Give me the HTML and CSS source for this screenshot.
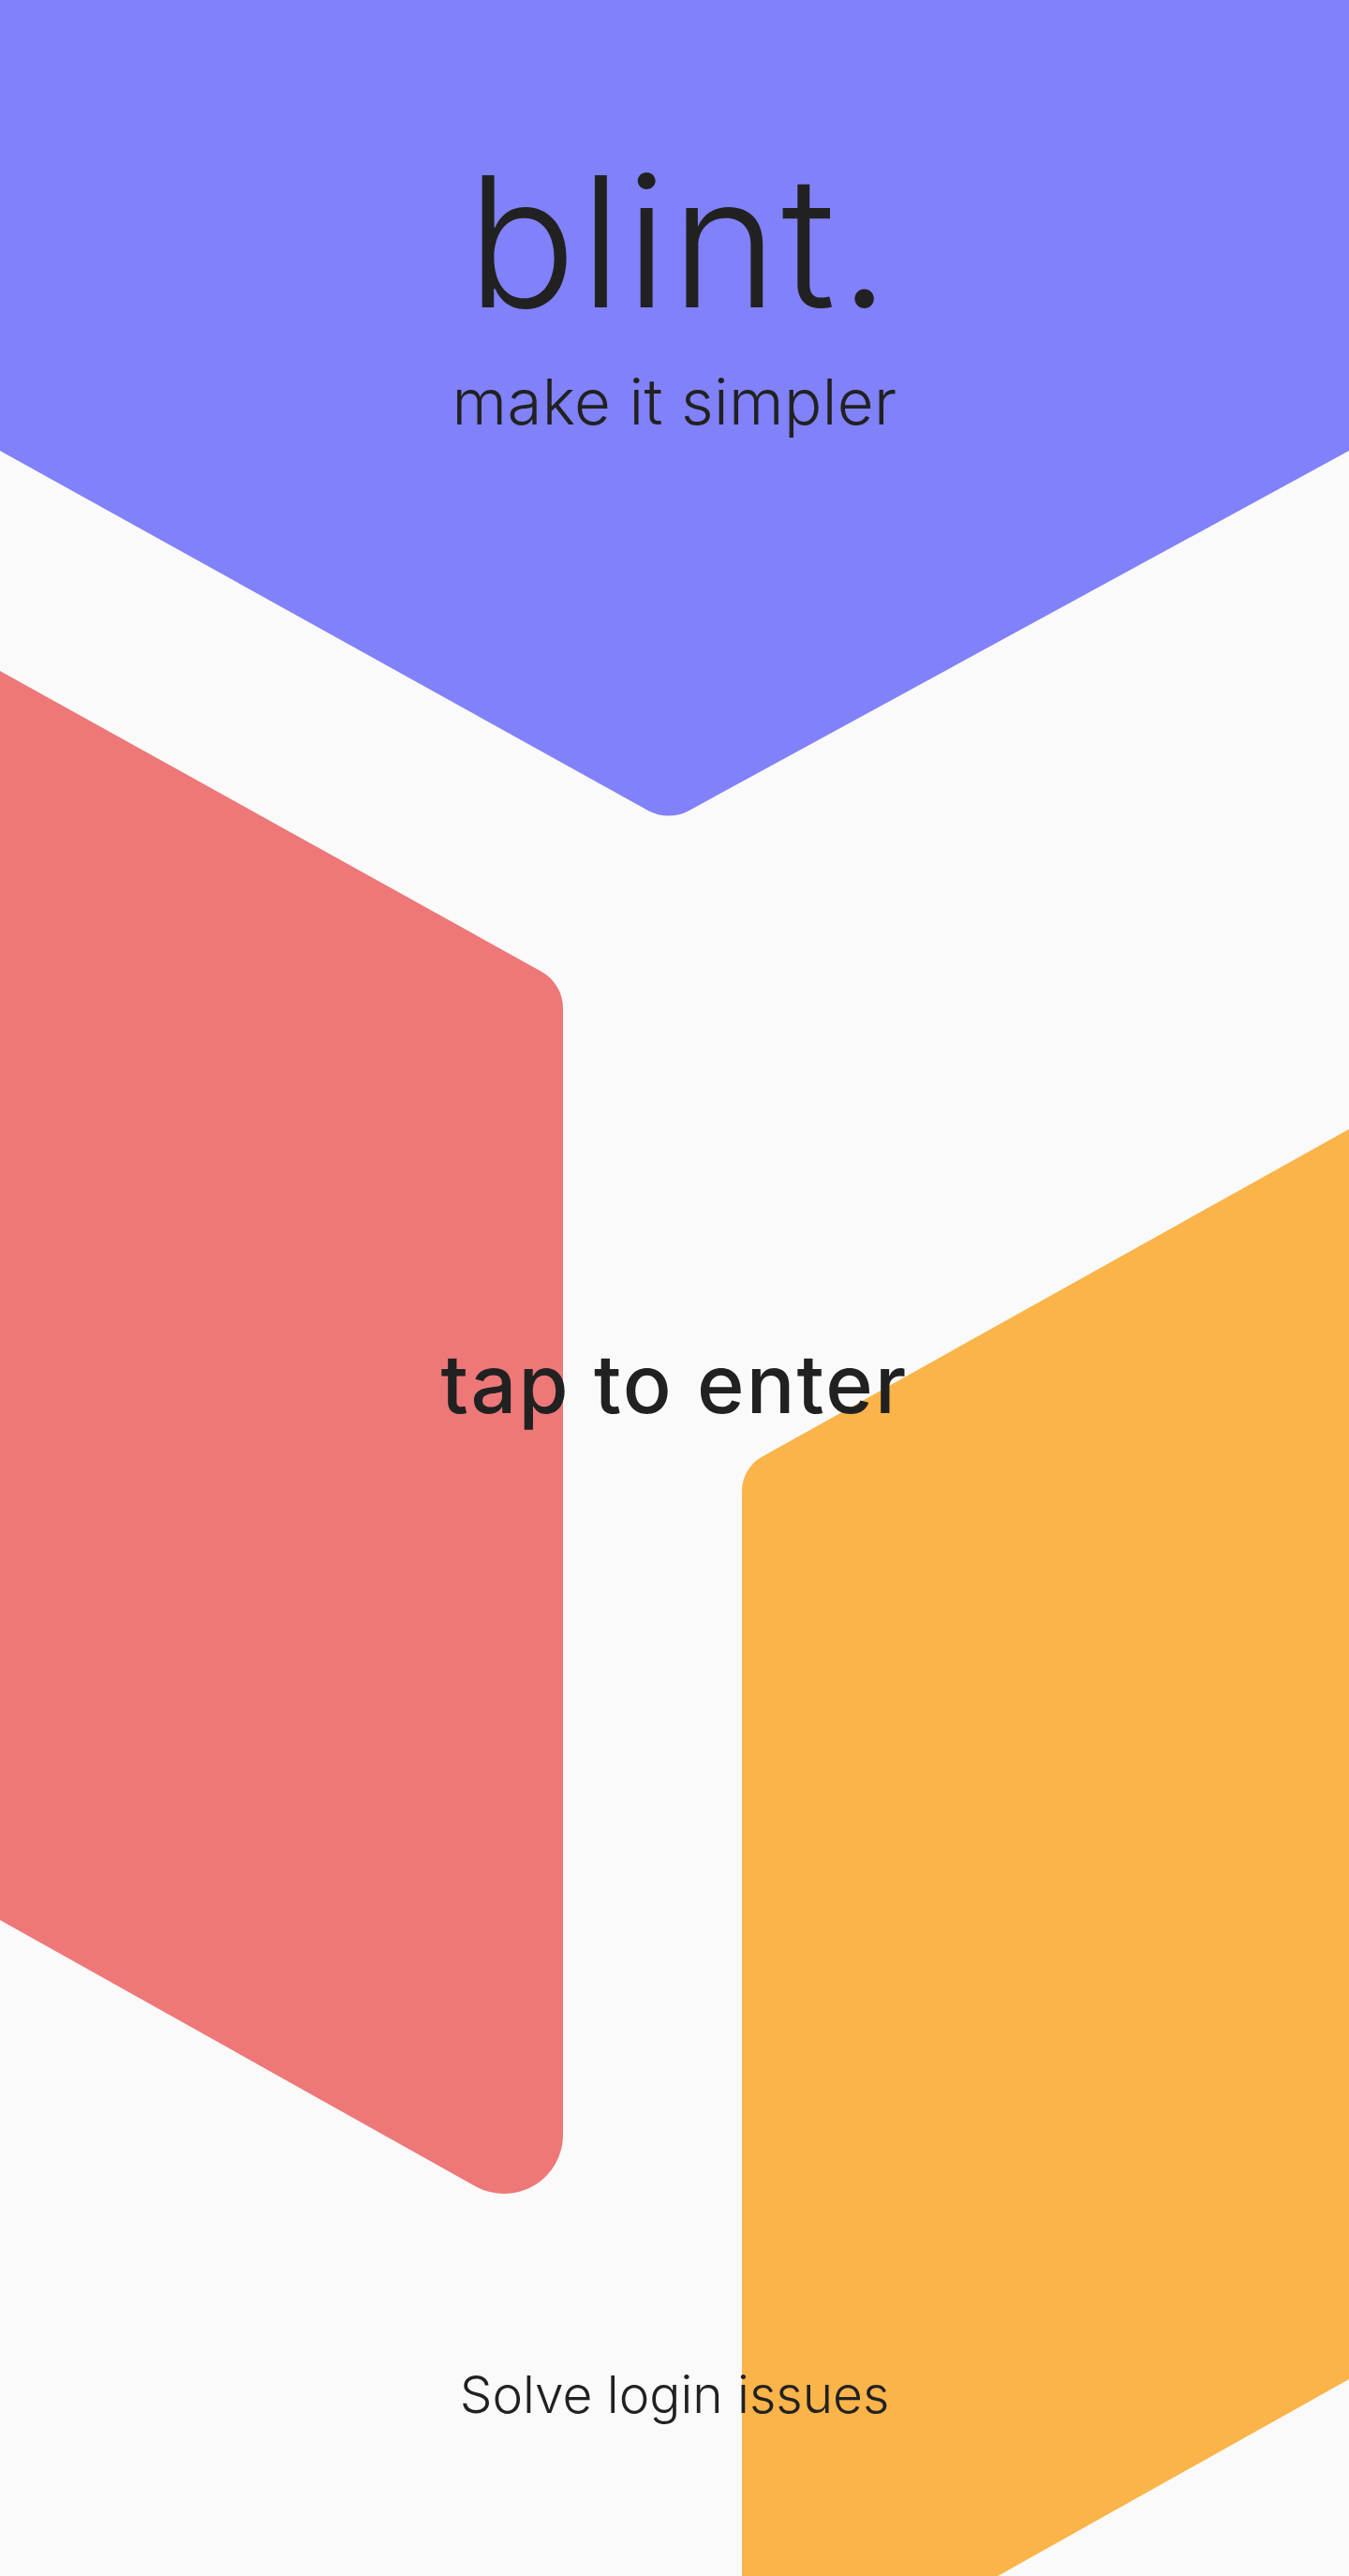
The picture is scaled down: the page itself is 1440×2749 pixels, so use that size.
FILE: index.html
```html
<!DOCTYPE html>
<html lang="en">
<head>
<meta charset="utf-8">
<title>blint.</title>
<link rel="stylesheet" href="styles.css">
</head>
<body>
<main class="screen">
  <svg class="cube" viewBox="0 0 1440 2749" width="1440" height="2749" aria-hidden="true">
    <path class="face-top" d="M0 0 H1440 V481 L735.14 865.15 A45 45 0 0 1 691.85 864.97 L0 481 Z"/>
    <path class="face-left" d="M0 716 L577.83 1036.74 A45 45 0 0 1 601 1076.1 V2278.06 A63 63 0 0 1 507.21 2333.04 L0 2049 Z"/>
    <path class="face-right" d="M1440 1205 L813.57 1554.54 A42 42 0 0 0 792 1591.3 V2902 L1440 2539 Z"/>
  </svg>
  <div class="content">
    <header class="brand-block">
      <h1 class="brand">blint.</h1>
      <p class="tagline">make it simpler</p>
    </header>
    <a class="enter" href="#">tap to enter</a>
    <a class="help" href="#">Solve login issues</a>
  </div>
</main>
</body>
</html>
```
FILE: styles.css
```css
html, body {
  margin: 0;
  padding: 0;
  background: #fafafa;
}

.screen {
  position: relative;
  width: 1440px;
  height: 2749px;
  overflow: hidden;
  background: #fafafa;
  font-family: Inter, "Noto Sans", sans-serif;
  color: #212121;
}

.cube {
  position: absolute;
  top: 0;
  left: 0;
  display: block;
}

.face-top { fill: #8181fa; }
.face-left { fill: #ee7878; }
.face-right { fill: #fab449; }

.content {
  position: relative;
  display: flex;
  flex-direction: column;
  align-items: center;
}

.brand-block {
  display: flex;
  flex-direction: column;
  align-items: center;
}

.brand {
  margin: 161px 0 0 12px;
  font-size: 194px;
  line-height: 1;
  font-weight: 350;
  letter-spacing: 3.5px;
}

.tagline {
  margin: 40px 0 0;
  font-size: 67px;
  line-height: 1;
  font-weight: 300;
  letter-spacing: 0.4px;
}

.enter {
  margin-top: 972px;
  font-size: 86px;
  line-height: 1;
  font-weight: 500;
  letter-spacing: 2.2px;
  color: #212121;
  text-decoration: none;
}

.help {
  margin-top: 1008px;
  font-size: 55px;
  line-height: 1;
  font-weight: 300;
  color: #212121;
  text-decoration: none;
}
```
